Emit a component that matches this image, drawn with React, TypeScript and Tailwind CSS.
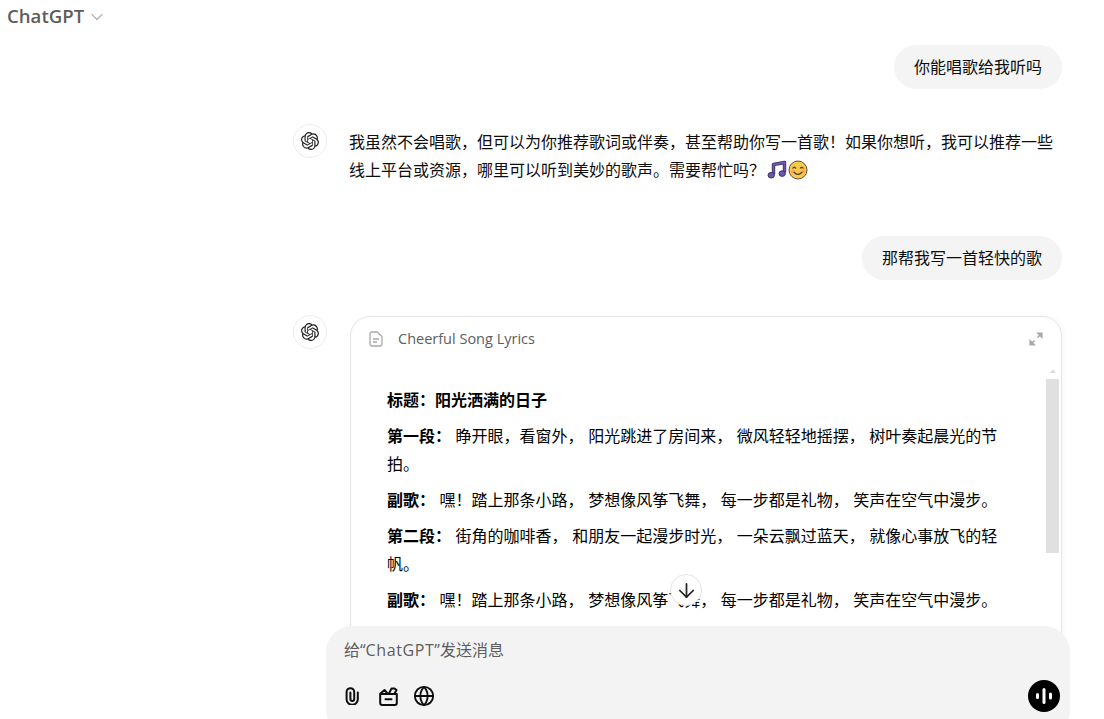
import React from 'react';
import { ChevronDown, ArrowDown, Globe } from 'lucide-react';
import { SiOpenai } from 'react-icons/si';

const font = { fontFamily: '"Open Sans", "Noto Sans CJK SC", sans-serif' };

const lyrics = [
  { label: '第一段：', text: '睁开眼，看窗外， 阳光跳进了房间来， 微风轻轻地摇摆， 树叶奏起晨光的节拍。' },
  { label: '副歌：', text: '嘿！踏上那条小路， 梦想像风筝飞舞， 每一步都是礼物， 笑声在空气中漫步。' },
  { label: '第二段：', text: '街角的咖啡香， 和朋友一起漫步时光， 一朵云飘过蓝天， 就像心事放飞的轻帆。' },
  { label: '副歌：', text: '嘿！踏上那条小路， 梦想像风筝飞舞， 每一步都是礼物， 笑声在空气中漫步。' },
];

function Avatar() {
  return (
    <div className="w-[34px] h-[34px] shrink-0 rounded-full border border-[#ededed] bg-white flex items-center justify-center text-[#1f1f1f]">
      <SiOpenai className="w-[18px] h-[18px]" />
    </div>
  );
}

function UserBubble({ text }: { text: string }) {
  return (
    <div className="flex justify-end">
      <div className="bg-[#f4f4f4] rounded-[22px] px-5 py-2 text-base leading-7 text-[#0d0d0d]">{text}</div>
    </div>
  );
}

function NoteEmoji() {
  return (
    <svg viewBox="0 0 20 20" className="inline-block ml-[2px] w-[20px] h-[20px] align-[-4px]">
      <path d="M6.5 14.5V4.5L17.5 2.5V12.5" fill="none" stroke="#3d3560" strokeWidth="3.4" strokeLinejoin="round" />
      <path d="M6.5 14.5V4.5L17.5 2.5V12.5" fill="none" stroke="#7056b0" strokeWidth="1.8" strokeLinejoin="round" />
      <ellipse cx="4.2" cy="15.2" rx="3.2" ry="2.8" fill="#7056b0" stroke="#3d3560" />
      <ellipse cx="15.2" cy="13.6" rx="3.2" ry="2.8" fill="#7056b0" stroke="#3d3560" />
    </svg>
  );
}

function SmileEmoji() {
  return (
    <svg viewBox="0 0 20 20" className="inline-block ml-[1px] w-[20px] h-[20px] align-[-4px]">
      <circle cx="10" cy="10" r="9" fill="#fbc748" stroke="#5a5040" strokeWidth="1" />
      <circle cx="4.8" cy="11.5" r="1.8" fill="#f5a06a" />
      <circle cx="15.2" cy="11.5" r="1.8" fill="#f5a06a" />
      <path d="M4.5 8.5Q6.2 6.2 8 8.5M12 8.5Q13.8 6.2 15.5 8.5" fill="none" stroke="#4a3a20" strokeWidth="1.1" />
      <path d="M5.8 12Q10 16.8 14.2 12" fill="none" stroke="#4a3a20" strokeWidth="1.2" />
    </svg>
  );
}

function DocIcon() {
  return (
    <svg viewBox="0 0 14 16" className="w-[14px] h-[16px] text-[#a8a8a8]" fill="none" stroke="currentColor" strokeWidth="1.3">
      <path d="M2.8 1h5.4L13 5.6v7.6a1.8 1.8 0 0 1-1.8 1.8H2.8A1.8 1.8 0 0 1 1 13.2V2.8A1.8 1.8 0 0 1 2.8 1z" />
      <path d="M4 8h6M4 11h4" />
    </svg>
  );
}

function ExpandIcon() {
  return (
    <svg viewBox="0 0 14 14" className="w-[14px] h-[14px] text-[#a8a8a8]" fill="currentColor" stroke="currentColor" strokeWidth="1.2">
      <path d="M8.5 1h4.5v4.5zM5.5 13H1V8.5z" />
      <path d="M12 2L8.5 5.5M2 12l3.5-3.5" fill="none" strokeWidth="1.6" />
    </svg>
  );
}

function ClipIcon() {
  return (
    <svg viewBox="0 0 14 18" className="w-[14px] h-[18px]" fill="none" stroke="#0d0d0d" strokeWidth="2" strokeLinecap="round">
      <path d="M12.8 5.5V12.2a5.6 5.6 0 0 1-11.2 0V5a3.8 3.8 0 0 1 7.6 0V12a1.9 1.9 0 0 1-3.8 0V5.5" />
    </svg>
  );
}

function ClapperIcon() {
  return (
    <svg viewBox="0 0 19 19" className="w-[19px] h-[19px]" fill="none" stroke="#0d0d0d" strokeWidth="2" strokeLinejoin="round" strokeLinecap="round">
      <path d="M1.2 7h16.6v9a2 2 0 0 1-2 2H3.2a2 2 0 0 1-2-2z" />
      <path d="M1.5 6.5L5.5 3l3 3.5" />
      <path d="M10 6.5L12.5 1.5h3l2 1.5-2 3.5" />
      <path d="M6.5 12.2h6" />
    </svg>
  );
}

function VoiceIcon() {
  return (
    <svg viewBox="0 0 32 32" className="w-8 h-8">
      <circle cx="16" cy="16" r="16" fill="#000" />
      <g stroke="#fff" strokeLinecap="round" strokeWidth="3">
        <path d="M9.5 14.5v3" />
        <path d="M16 9.5v13" />
        <path d="M22.5 14v4" />
      </g>
    </svg>
  );
}

export default function App() {
  return (
    <div className="relative w-[1104px] h-[719px] overflow-hidden bg-white text-[#0d0d0d]" style={font}>
      <div className="h-[32px] pl-[7px] flex items-center gap-[3px]">
        <span className="text-[18.6px] font-semibold text-[#5d5d5d]">ChatGPT</span>
        <ChevronDown className="w-5 h-5 text-[#b4b4b4] mt-[1px]" strokeWidth={1.5} />
      </div>

      <div className="pl-[293px] pr-[42px] pt-[13px]">
        <UserBubble text="你能唱歌给我听吗" />

        <div className="flex gap-[22px] mt-[35px]">
          <Avatar />
          <p className="text-base leading-7 mt-[4px] w-[713px]">
            我虽然不会唱歌，但可以为你推荐歌词或伴奏，甚至帮助你写一首歌！如果你想听，我可以推荐一些线上平台或资源，哪里可以听到美妙的歌声。需要帮忙吗？
            <NoteEmoji />
            <SmileEmoji />
          </p>
        </div>

        <div className="mt-[52px]">
          <UserBubble text="那帮我写一首轻快的歌" />
        </div>

        <div className="flex gap-[23px] mt-[35px]">
          <Avatar />
          <div className="mt-px w-[712px] h-[400px] shrink-0 rounded-[20px] border border-[#e5e5e5] bg-white shadow-[2px_0_6px_rgba(0,0,0,0.03)]">
            <div className="h-[44px] px-[18px] flex items-center">
              <DocIcon />
              <span className="ml-[15px] text-[14.5px] text-[#5d5d5d]">Cheerful Song Lyrics</span>
              <div className="ml-auto">
                <ExpandIcon />
              </div>
            </div>
            <div className="flex">
              <div className="pl-[36px] pt-[25px] w-[650px] text-base leading-7 text-black flex flex-col gap-2 [word-spacing:0.4px]">
                <p className="font-bold">标题：阳光洒满的日子</p>
                {lyrics.map((item, i) => (
                  <p key={i}>
                    <span className="font-bold">{item.label}</span> {item.text}
                  </p>
                ))}
              </div>
              <div className="ml-auto mr-[2px] w-[13px] flex flex-col items-center pt-[8px]">
                <div className="w-0 h-0 border-x-[3px] border-x-transparent border-b-[4px] border-b-[#dcdcdc]" />
                <div className="w-[13px] h-[174px] bg-[#e0e0e0] mt-[6px]" />
              </div>
            </div>
          </div>
        </div>
      </div>

      <div className="absolute left-[670px] top-[574px] w-8 h-8 rounded-full border border-[#e5e5e5] bg-white flex items-center justify-center">
        <ArrowDown className="w-[23px] h-[23px] text-[#222]" strokeWidth={1.8} />
      </div>

      <div className="absolute left-[326px] top-[626px] w-[744px] h-[110px] rounded-[26px] bg-[#f3f3f3] px-[18px] pt-[12px]">
        <div className="text-base leading-6 text-[#5d5d5d]">
          给“<span className="tracking-[0.6px]">ChatGPT</span>”发送消息
        </div>
        <div className="flex items-center mt-[18px]">
          <div className="flex items-center -ml-[10px]">
            <div className="w-9 flex justify-center">
              <ClipIcon />
            </div>
            <div className="w-9 flex justify-center">
              <ClapperIcon />
            </div>
            <div className="w-9 flex justify-center">
              <Globe className="w-[22px] h-[22px] text-[#0d0d0d]" strokeWidth={2} />
            </div>
          </div>
          <div className="ml-auto -mr-2">
            <VoiceIcon />
          </div>
        </div>
      </div>
    </div>
  );
}
